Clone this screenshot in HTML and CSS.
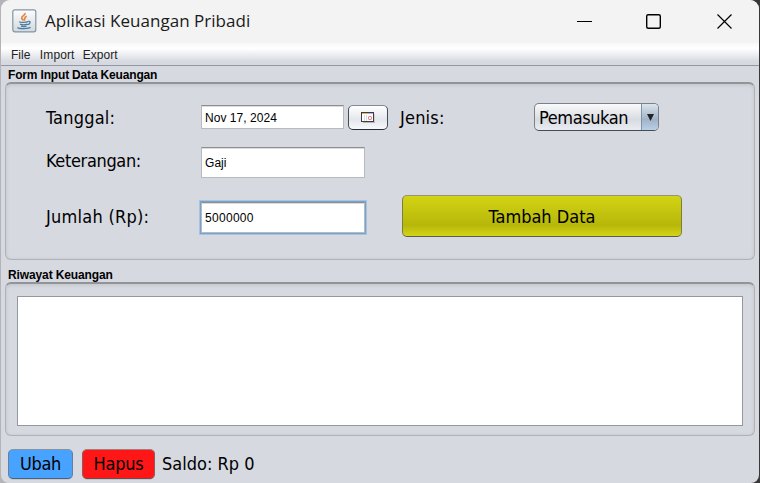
FILE: index.html
```html
<!DOCTYPE html>
<html lang="id">
<head>
<meta charset="utf-8">
<title>Aplikasi Keuangan Pribadi</title>
<link rel="stylesheet" href="styles.css">
</head>
<body>
<div class="window">
  <header class="titlebar">
    <svg class="app-icon" width="25" height="24" viewBox="0 0 25 24">
      <defs><linearGradient id="g" x1="0" y1="0" x2="0" y2="1"><stop offset="0" stop-color="#fdfdfd"/><stop offset="1" stop-color="#cfd9e0"/></linearGradient></defs>
      <rect x=".8" y=".8" width="23" height="22" rx="2" fill="url(#g)" stroke="#8295a3" stroke-width="1.2"/>
      <path d="M13 4c1 2.300-4 2.900-3.300 5.200.3 1 1.300 1.300 1.700 2.300M14.800 7.300c-3.400 1.300-1.400 2.500-2.600 4.200" fill="none" stroke="#e8853a" stroke-width="1.700"/>
      <path d="M7 12.700c1.500.8 7 .8 9-.1M8 15.200c2 .7 5.500.7 7.300 0M9 17.200c1.500.5 4 .5 5.500 0M16.200 12.400c3-.5 2.200 2.600-.7 3.300M5.500 18.500c1.500 1.600 11.500 1.500 13-.3" fill="none" stroke="#49799c" stroke-width="1.300"/>
    </svg>
    <span class="title">Aplikasi Keuangan Pribadi</span>
    <svg class="controls" width="158" height="20" viewBox="0 0 158 20" fill="none" stroke="#000">
      <path d="M0 10.500h15" stroke-width="1"/>
      <rect x="69.700" y="3.700" width="13.600" height="13.600" rx="1.500" stroke-width="1.400"/>
      <path d="M140.500 3.500l14 14M154.500 3.500l-14 14" stroke-width="1.200"/>
    </svg>
  </header>
  <nav class="menubar"><span>File</span><span class="import">Import</span><span>Export</span></nav>
  <h2 class="heading">Form Input Data Keuangan</h2>
  <section class="panel form">
    <label class="t tanggal">Tanggal:</label>
    <div class="date"><div class="field">Nov 17, 2024</div>
      <button class="cal"><svg width="14" height="11" viewBox="0 0 14 11"><path d="M2 10.500h12V2" stroke="#b9b5b4" fill="none"/><rect x=".5" y=".5" width="12" height="9" fill="#fff" stroke="#403c40"/><path d="M1 1.500h5" stroke="#efb04e"/><path d="M6 1.500h6" stroke="#a9b5df"/><path d="M3.500 3v6M5.500 3v6" stroke="#dedada"/><rect x="7.500" y="4.500" width="3" height="3" rx="1" fill="#fff" stroke="#e75a64"/></svg></button>
    </div>
    <label class="t jenis">Jenis:</label>
    <div class="combo"><span class="t pemasukan">Pemasukan</span><span class="arrow"><svg width="7" height="7" viewBox="0 0 7 7"><path d="M0 0h7L3.500 7z" fill="#222"/></svg></span></div>
    <label class="t keterangan">Keterangan:</label>
    <div class="field gaji">Gaji</div>
    <label class="t jumlah">Jumlah (Rp):</label>
    <div class="field focus">5000000</div>
    <button class="t add">Tambah Data</button>
  </section>
  <h2 class="heading second">Riwayat Keuangan</h2>
  <section class="panel history"><div class="table"></div></section>
  <footer class="actions"><button class="t ubah">Ubah</button><button class="t hapus">Hapus</button><span class="t saldo">Saldo: Rp 0</span></footer>
</div>
</body>
</html>
```
FILE: styles.css
```css
* { box-sizing: border-box; }
body { margin: 0; width: 760px; height: 483px; overflow: hidden; padding: 0 1px; background: linear-gradient(90deg, #b4b4b8 50%, #383838 50%); font-family: "Liberation Sans", Arial, sans-serif; }
.window { height: 483px; background: #d6d9e0; border-radius: 9px 9px 8px 8px; overflow: hidden; }
.titlebar { height: 43px; background: #f3f3f3; display: flex; align-items: center; padding: 0 24px 2px 11px; }
.title { font: 17px/24px "Open Sans", sans-serif; color: #1a1a1a; margin-left: 8px; white-space: nowrap; letter-spacing: .02px; }
.controls { margin-left: auto; }
.menubar { height: 23px; display: flex; padding: 0 10px; gap: 9px; font-size: 12px; line-height: 24px; color: #232323; background: linear-gradient(#f8f8fa, #fff 25%, #d6d9e0 85%); border-bottom: 1px solid #9297a1; }
.import { letter-spacing: .12px; margin-left: .5px; margin-right: -.8px; }
.heading { margin: 0; padding-left: 7px; height: 16px; font-size: 12px; line-height: 18px; font-weight: bold; color: #000; white-space: nowrap; letter-spacing: -.17px; }
.panel { margin: 0 4px; border: 1px solid #b0b2b7; border-top: 2px solid #919499; border-radius: 6px; box-shadow: inset 0 2px 3px #c8cbd0, inset 0 0 3px #c3c6cb; }
.t { font-family: "DejaVu Sans Condensed", "DejaVu Sans", sans-serif; font-stretch: condensed; font-size: 18px; line-height: 24px; color: #000; white-space: nowrap; }
.form { height: 178px; padding: 19px 0 0 40px; display: grid; grid-template-columns: 154px 200px 134px 150px; grid-template-rows: 30px 14px 32px 15px 44px; justify-items: start; align-items: start; }
.tanggal { grid-area: 1 / 1; padding-top: 3px; letter-spacing: .2px; }
.date { grid-area: 1 / 2; display: flex; gap: 4px; padding: 2px 0 0 1px; }
.field { width: 143px; height: 24px; background: #fff; border: 1px solid #b8babf; border-top: 1px solid #8d8e92; box-shadow: inset 0 1px #dcdcdc; padding-left: 3px; font-size: 12px; line-height: 24px; color: #000; letter-spacing: .05px; }
button { margin: 0; padding: 0; border: 1px solid #666; border-radius: 5px; text-align: center; }
.cal { width: 40px; height: 25px; border-color: #858991 #464c57 #272d38; background: linear-gradient(#fff, #e3e6eb 60%, #f8f9fc); display: grid; place-content: center; }
.jenis { grid-area: 1 / 3; padding-top: 3px; letter-spacing: .2px; }
.combo { grid-area: 1 / 4; width: 125px; height: 28px; display: flex; justify-content: space-between; border: 1px solid #7c8088; border-bottom-color: #444c59; border-radius: 5px; background: linear-gradient(#fafafb, #d8dbe0 60%, #e9ecf2); overflow: hidden; padding-left: 4px; }
.pemasukan { line-height: 27px; letter-spacing: -.4px; }
.arrow { width: 17px; background: linear-gradient(#dae4eb, #a0b3c8 60%, #b9d0e8); border-left: 1px solid #8292a6; display: grid; place-content: center; }
.keterangan { grid-area: 3 / 1; padding-top: 2px; letter-spacing: -.35px; }
.gaji { grid-area: 3 / 2; width: 164px; height: 31px; line-height: 30px; margin-left: 1px; }
.jumlah { grid-area: 5 / 1; padding-top: 11px; letter-spacing: .25px; }
.focus { grid-area: 5 / 2; width: 164px; height: 31px; line-height: 30px; margin: 8px 0 0 1px; outline: 1px solid #73a4d1; box-shadow: inset 0 1px #dcdcdc, 0 0 0 2px #a9c3dd; letter-spacing: .3px; }
.add { grid-area: 5 / 3 / 6 / 5; width: 280px; height: 42px; margin: 1px 0 0 2px; padding-top: 2px; border-color: #929576 #7c7e3c #595c50; background: linear-gradient(#d3d413, #b7b70b 73%, #d4d516); }
.second { height: 22px; line-height: 30px; letter-spacing: -.12px; }
.history { height: 154px; padding: 12px 11px 9px; }
.table { height: 130px; border: 1px solid #9297a1; background: #fff; }
.actions { display: flex; padding: 13px 0 0 7px; }
.actions button { height: 30px; box-shadow: 0 1px #c2c5cb; }
.ubah { width: 65px; background: #48a2ff; border-color: #8494a5 #667f9a #4b607a; letter-spacing: -.3px; }
.hapus { width: 73px; margin-left: 9px; background: #ff1717; border-color: #a57c7c #935a5a #714a4a; letter-spacing: -.2px; }
.saldo { margin-left: 7px; line-height: 30px; }
```
